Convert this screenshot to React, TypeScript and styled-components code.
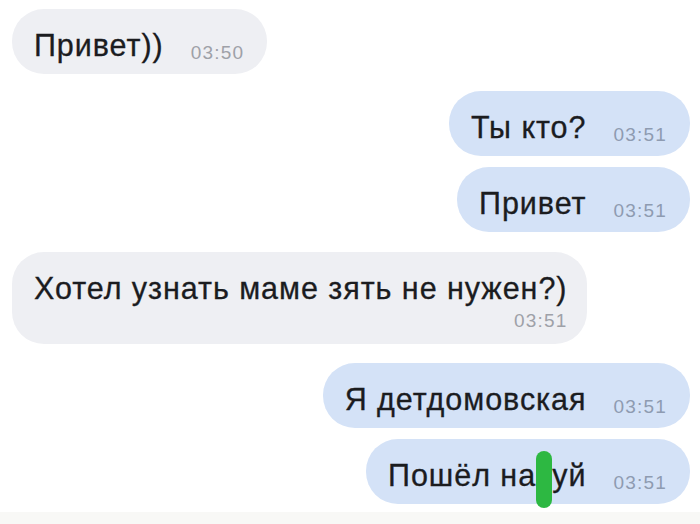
import React from "react";
import styled, { createGlobalStyle } from "styled-components";

const Global = createGlobalStyle`
  html, body { margin: 0; padding: 0; background: #ffffff; }
  body { font-family: "Liberation Sans", Arial, sans-serif; }
`;

const Page = styled.div`
  width: 700px;
  height: 524px;
  background: #ffffff;
  display: flex;
  flex-direction: column;
  overflow: hidden;
`;

const Chat = styled.div`
  flex: 1;
  display: flex;
  flex-direction: column;
  padding: 9px 10px 0 12px;
`;

const Row = styled.div<{ $out?: boolean; $gap: number }>`
  display: flex;
  justify-content: ${(p) => (p.$out ? "flex-end" : "flex-start")};
  margin-top: ${(p) => p.$gap}px;
`;

const Bubble = styled.div<{ $out?: boolean; $stack?: boolean }>`
  display: flex;
  flex-direction: ${(p) => (p.$stack ? "column" : "row")};
  align-items: flex-end;
  gap: ${(p) => (p.$stack ? "5px" : "27px")};
  padding: ${(p) => (p.$stack ? "18px 20px 13px 22px" : "18px 23px 11px 22px")};
  border-radius: 32px;
  background: ${(p) => (p.$out ? "#d4e2f7" : "#eeeff3")};
`;

const Text = styled.div<{ $stack?: boolean }>`
  font-size: 30.5px;
  line-height: 36px;
  letter-spacing: 0.95px;
  color: #1b1c1f;
  -webkit-text-stroke: 0.3px #1b1c1f;
  white-space: nowrap;
  align-self: ${(p) => (p.$stack ? "flex-start" : "auto")};
`;

const Time = styled.div<{ $out?: boolean }>`
  font-size: 19px;
  line-height: 20px;
  letter-spacing: 1.2px;
  color: ${(p) => (p.$out ? "#8e9bb1" : "#9ea1a8")};
  white-space: nowrap;
`;

const Censor = styled.span`
  position: relative;
  display: inline-block;
  &::after {
    content: "";
    position: absolute;
    left: 50%;
    top: -6px;
    width: 16px;
    height: 57px;
    margin-left: -8px;
    border-radius: 8px;
    background: #2db842;
  }
`;

const Footer = styled.div`
  height: 12px;
  background: #f8f8f6;
`;

export default function App() {
  return (
    <Page>
      <Global />
      <Chat>
        <Row $gap={0}>
          <Bubble>
            <Text>Привет))</Text>
            <Time>03:50</Time>
          </Bubble>
        </Row>
        <Row $out $gap={17}>
          <Bubble $out>
            <Text>Ты кто?</Text>
            <Time $out>03:51</Time>
          </Bubble>
        </Row>
        <Row $out $gap={11}>
          <Bubble $out>
            <Text>Привет</Text>
            <Time $out>03:51</Time>
          </Bubble>
        </Row>
        <Row $gap={20}>
          <Bubble $stack>
            <Text $stack>Хотел узнать маме зять не нужен?)</Text>
            <Time>03:51</Time>
          </Bubble>
        </Row>
        <Row $out $gap={19}>
          <Bubble $out>
            <Text>Я детдомовская</Text>
            <Time $out>03:51</Time>
          </Bubble>
        </Row>
        <Row $out $gap={11}>
          <Bubble $out>
            <Text>
              Пошёл на<Censor>х</Censor>уй
            </Text>
            <Time $out>03:51</Time>
          </Bubble>
        </Row>
      </Chat>
      <Footer />
    </Page>
  );
}
